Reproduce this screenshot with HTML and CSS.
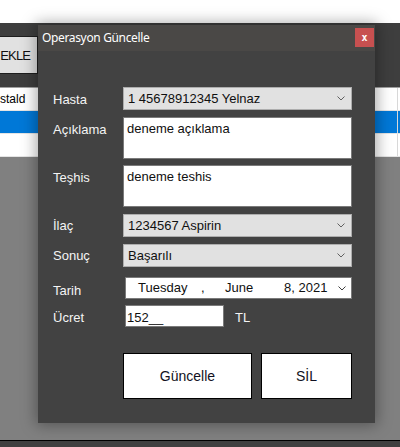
FILE: index.html
```html
<!DOCTYPE html>
<html lang="tr">
<head>
<meta charset="utf-8">
<title>Operasyon Güncelle</title>
<link rel="stylesheet" href="styles.css">
</head>
<body>
<div class="app">
  <div class="topstrip"></div>
  <div class="toolbar">
    <div class="btn-ekle">EKLE</div>
  </div>
  <div class="table">
    <div class="trow"><span class="cell">stald</span><span class="coldiv"></span></div>
    <div class="trow sel"><span class="cell"></span><span class="coldiv"></span></div>
    <div class="trow"><span class="cell"></span><span class="coldiv"></span></div>
  </div>
  <div class="gridbg"></div>
  <div class="statusbar"></div>
</div>

<div class="dialog">
  <div class="titlebar">
    <span class="title">Operasyon Güncelle</span>
    <span class="close">x</span>
  </div>
  <div class="body">
    <div class="row r-hasta">
      <span class="label lp5">Hasta</span>
      <div class="combo"><span>1 45678912345 Yelnaz</span><svg class="chev" width="8" height="5" viewBox="0 0 8 5"><polyline points="0.5,0.5 4,4 7.5,0.5" fill="none" stroke="#606060" stroke-width="1"/></svg></div>
    </div>
    <div class="row r-acik">
      <span class="label lp5">Açıklama</span>
      <div class="textbox">deneme açıklama</div>
    </div>
    <div class="row r-teshis">
      <span class="label lp5">Teşhis</span>
      <div class="textbox">deneme teshis</div>
    </div>
    <div class="row r-ilac">
      <span class="label lp4">İlaç</span>
      <div class="combo"><span>1234567 Aspirin</span><svg class="chev" width="8" height="5" viewBox="0 0 8 5"><polyline points="0.5,0.5 4,4 7.5,0.5" fill="none" stroke="#606060" stroke-width="1"/></svg></div>
    </div>
    <div class="row r-sonuc">
      <span class="label lp4">Sonuç</span>
      <div class="combo"><span>Başarılı</span><svg class="chev" width="8" height="5" viewBox="0 0 8 5"><polyline points="0.5,0.5 4,4 7.5,0.5" fill="none" stroke="#606060" stroke-width="1"/></svg></div>
    </div>
    <div class="row r-tarih">
      <span class="label lp6">Tarih</span>
      <div class="datepick">
        <span class="d-day">Tuesday</span><span class="d-comma">,</span><span class="d-month">June</span><span class="d-year">8, 2021</span>
        <svg class="chev dchev" width="8" height="5" viewBox="0 0 8 5"><polyline points="0.5,0.5 4,4 7.5,0.5" fill="none" stroke="#404040" stroke-width="1"/></svg>
      </div>
    </div>
    <div class="row r-ucret">
      <span class="label lp5">Ücret</span>
      <div class="pricebox">152__</div>
      <span class="unit">TL</span>
    </div>
    <div class="buttons">
      <div class="btn btn-update">Güncelle</div>
      <div class="btn btn-delete">SİL</div>
    </div>
  </div>
</div>
</body>
</html>
```

FILE: styles.css
```css
* { box-sizing: border-box; }

html, body {
  margin: 0;
  padding: 0;
}

body {
  width: 400px;
  height: 447px;
  overflow: hidden;
  position: relative;
  font-family: "Liberation Sans", Arial, sans-serif;
  background: #808080;
}

.app {
  height: 447px;
  display: flex;
  flex-direction: column;
}

.topstrip {
  height: 23px;
  background: #ffffff;
}

.toolbar {
  height: 64px;
  background: #3e3e3e;
  padding-top: 13px;
}

.btn-ekle {
  width: 38px;
  height: 38px;
  background: #e1e1e1;
  border-top: 1px solid #1e1e1e;
  border-bottom: 1px solid #1e1e1e;
  border-right: 1px solid #1e1e1e;
  font-size: 13px;
  letter-spacing: -0.9px;
  color: #101010;
  display: flex;
  align-items: center;
  justify-content: flex-end;
  padding-right: 7px;
  white-space: nowrap;
}

.table {
  border-top: 1px solid #a0a0a0;
}

.trow {
  height: 23px;
  background: #ffffff;
  border-bottom: 1px solid #e4e4e4;
  display: flex;
  align-items: center;
  position: relative;
}

.trow.sel {
  background: #0078d7;
}

.cell {
  font-size: 12px;
  color: #000;
  flex: 1;
}

.coldiv {
  width: 1px;
  height: 100%;
  background: #d8d8d8;
  margin-right: 2px;
}

.gridbg {
  flex: 1;
  background: #808080;
}

.statusbar {
  height: 7px;
  border-top: 1px solid #000;
  background: #404040;
}

/* dialog */
.dialog {
  position: absolute;
  left: 38px;
  top: 25px;
  width: 337px;
  height: 398px;
  background: #424242;
  box-shadow: 0 0 14px 2px rgba(0, 0, 0, 0.35);
}

.titlebar {
  height: 26px;
  background: #4a4846;
  position: relative;
  display: flex;
  align-items: center;
  padding-left: 4px;
}

.title {
  font-family: "Noto Sans", sans-serif;
  font-size: 12px;
  letter-spacing: -0.35px;
  color: #ffffff;
  margin-top: -1px;
}

.close {
  position: absolute;
  right: 1px;
  top: 3px;
  width: 19px;
  height: 19px;
  background: #c75050;
  color: #ffffff;
  font-family: "DejaVu Sans Mono", monospace;
  font-weight: bold;
  font-size: 10px;
  display: flex;
  align-items: center;
  justify-content: center;
}

.body {
  padding: 36px 0 0 15px;
  display: flex;
  flex-direction: column;
}

.row {
  display: flex;
  align-items: flex-start;
}

.label {
  width: 70px;
  font-size: 13px;
  line-height: 15px;
  color: #f4f4f4;
}

.lp4 { padding-top: 4px; }
.lp5 { padding-top: 5px; }
.lp6 { padding-top: 6px; }

.r-acik { margin-top: 7px; }
.r-teshis { margin-top: 6px; }
.r-ilac { margin-top: 7px; }
.r-sonuc { margin-top: 7px; }
.r-tarih { margin-top: 10px; }
.r-ucret { margin-top: 6px; }

.combo {
  width: 229px;
  height: 23px;
  background: #e1e1e1;
  border: 1px solid #adadad;
  display: flex;
  align-items: center;
  justify-content: space-between;
  padding: 0 6px 0 4px;
  font-size: 13px;
  line-height: 15px;
  color: #101010;
}

.chev { display: block; }

.textbox {
  width: 229px;
  height: 42px;
  background: #ffffff;
  border: 1px solid #7a7a7a;
  padding: 3px 3px;
  font-size: 13px;
  line-height: 15px;
  color: #101010;
}

.datepick {
  margin-left: 2px;
  width: 227px;
  height: 22px;
  background: #ffffff;
  border: 1px solid #7a7a7a;
  display: flex;
  align-items: flex-start;
  padding: 2px 0 0 12px;
  font-size: 13px;
  line-height: 15px;
  color: #101010;
  position: relative;
}

.d-day { width: 63px; }
.d-comma { width: 24px; }
.d-month { width: 59px; }
.d-year { flex: 1; }

.dchev {
  margin: 6px 5px 0 0;
}

.pricebox {
  margin-left: 2px;
  width: 99px;
  height: 22px;
  background: #ffffff;
  border: 1px solid #7a7a7a;
  padding: 4px 0 0 1px;
  font-size: 13px;
  line-height: 15px;
  color: #101010;
}

.unit {
  margin-left: 11px;
  padding-top: 5px;
  font-size: 13px;
  line-height: 15px;
  color: #f4f4f4;
}

.buttons {
  margin-top: 26px;
  margin-left: 70px;
  display: flex;
  gap: 9px;
}

.btn {
  height: 46px;
  background: #ffffff;
  border: 1px solid #000000;
  display: flex;
  align-items: center;
  justify-content: center;
  font-size: 14px;
  color: #111122;
}

.btn-update { width: 129px; }
.btn-delete { width: 91px; }
```
